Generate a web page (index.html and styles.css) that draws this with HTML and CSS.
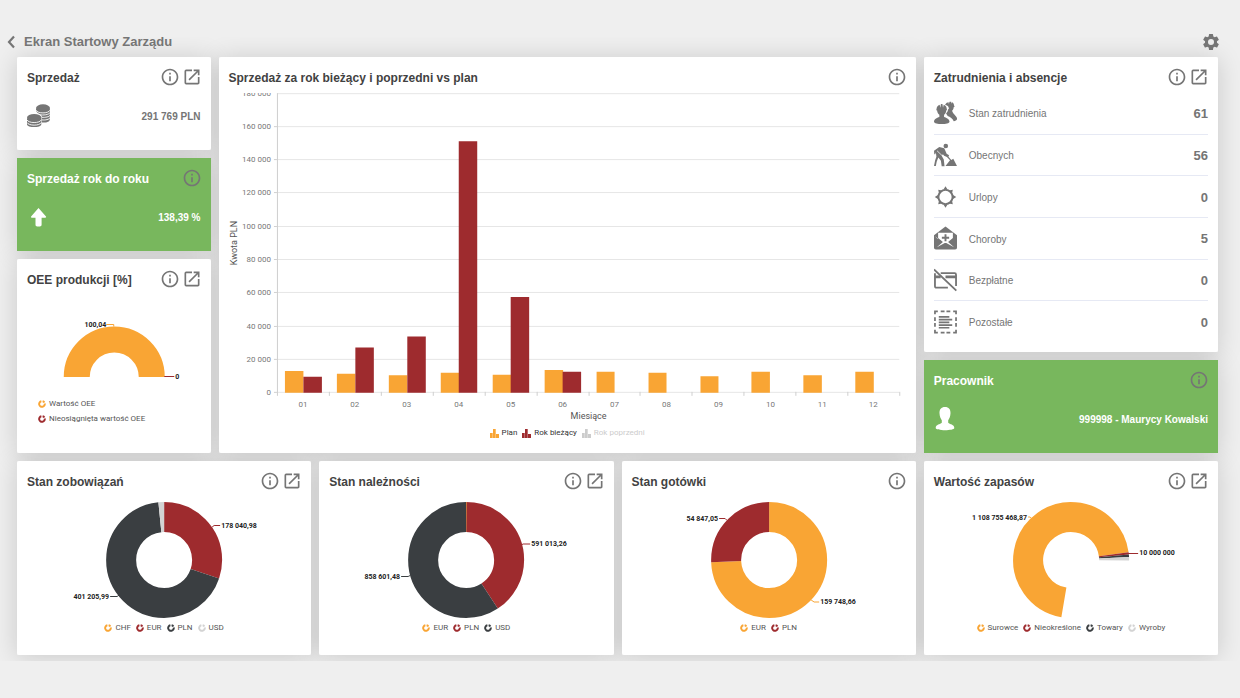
FILE: index.html
```html
<!DOCTYPE html>
<html lang="pl">
<head>
<meta charset="utf-8">
<title>Ekran Startowy Zarządu</title>
<link rel="stylesheet" href="styles.css">
</head>
<body>
<svg class="sprite" aria-hidden="true">
  <symbol id="info" viewBox="0 0 24 24"><path d="M11 7h2v2h-2zm0 4h2v6h-2zm1-9C6.480 2 2 6.480 2 12s4.480 10 10 10 10-4.480 10-10S17.520 2 12 2zm0 18c-4.410 0-8-3.590-8-8s3.590-8 8-8 8 3.590 8 8-3.590 8-8 8z"/></symbol>
  <symbol id="open" viewBox="0 0 24 24"><path d="M19 19H5V5h7V3H5a2 2 0 0 0-2 2v14a2 2 0 0 0 2 2h14c1.100 0 2-.9 2-2v-7h-2v7zM14 3v2h3.590l-9.830 9.830 1.410 1.410L19 6.410V10h2V3h-7z"/></symbol>
  <symbol id="ring" viewBox="0 0 8 8"><path d="M3.400 1.300A2.800 2.800 0 1 0 6.700 3.400M4.600 1.300A2.800 2.800 0 0 1 6.400 2.600" fill="none" stroke="currentColor" stroke-width="2"/></symbol>
  <symbol id="bars" viewBox="0 0 9 9"><path d="M0 4h2.700v5H0zM3 0h2.700v9H3zM6 5h3v4H6z"/></symbol>
</svg>

<header class="topbar">
  <button class="icon-btn back" aria-label="Wstecz"><svg viewBox="0 0 8 14"><path d="M7 1.500 2 7l5 5.500" fill="none" stroke="currentColor" stroke-width="2.200"/></svg></button>
  <h1 class="page-title">Ekran Startowy Zarządu</h1>
  <button class="icon-btn" aria-label="Ustawienia"><svg class="icon" viewBox="0 0 24 24"><path d="M19.140 12.940c.04-.3.060-.61.060-.94s-.02-.64-.07-.94l2.030-1.580a.49.49 0 0 0 .12-.61l-1.920-3.320a.49.49 0 0 0-.59-.22l-2.390.96a7 7 0 0 0-1.620-.94l-.36-2.540a.48.48 0 0 0-.48-.41h-3.840a.47.470 0 0 0-.47.410l-.36 2.540c-.59.240-1.130.570-1.620.940l-2.390-.96a.47.470 0 0 0-.59.220L2.740 8.870a.48.480 0 0 0 .12.610l2.030 1.580c-.05.300-.09.630-.09.940s.020.640.070.940l-2.030 1.580a.49.490 0 0 0-.12.610l1.920 3.320c.12.220.370.290.590.220l2.390-.96c.5.380 1.030.700 1.620.940l.36 2.540c.05.240.240.410.480.410h3.840c.240 0 .440-.17.470-.41l.36-2.540a6.800 6.800 0 0 0 1.620-.94l2.390.96c.220.080.470 0 .590-.22l1.920-3.320a.47.470 0 0 0-.12-.61l-2.010-1.580zM12 15.600A3.600 3.600 0 1 1 12 8.400a3.600 3.600 0 0 1 0 7.200z"/></svg></button>
</header>

<main class="board">
  <section class="card small">
    <div class="card-head"><h2>Sprzedaż</h2><button class="icon-btn" aria-label="Informacje"><svg class="icon"><use href="#info"/></svg></button><button class="icon-btn" aria-label="Otwórz"><svg class="icon"><use href="#open"/></svg></button></div>
    <div class="kpi">
      <svg class="kpi-icon" viewBox="0 0 24 24"><path d="M9 4.800C9 10 12 8.500 14.800 12v6.500c4 .5 8-.8 8-2.800v-11zM0 14.500v5.700C0 24 14.300 24 14.300 20.200v-5.700z"/><g fill="none" stroke="#fff" stroke-width=".9"><path d="M9 6.200c1.500 3.600 12.400 3.600 14 0M12.500 10.700c3.500.8 9.500 0 10.500-2M14.800 13.300c3.600.4 7.500-.5 8.200-2.100M14.800 15.900c3.600.4 7.500-.5 8.200-2.100M0 15.900c1.500 3.500 12.800 3.500 14.300 0M0 18.500c1.500 3.500 12.800 3.500 14.300 0"/></g><ellipse cx="16" cy="4" rx="7" ry="3.700"/><ellipse cx="7.200" cy="13.700" rx="7.200" ry="3.800"/></svg>
      <span>291 769 PLN</span>
    </div>
  </section>

  <section class="card chart-card">
    <div class="card-head"><h2>Sprzedaż za rok bieżący i poprzedni vs plan</h2><button class="icon-btn" aria-label="Informacje"><svg class="icon"><use href="#info"/></svg></button></div>
    <svg class="bar-chart" viewBox="0 0 678 330" role="img" aria-label="Sprzedaż miesięczna">
      <path class="grid-line" d="M48 .5H671M48 33.500H671M48 66.500H671M48 99.500H671M48 133.500H671M48 166.500H671M48 199.500H671M48 233.500H671M48 266.500H671M48 299.500H671"/>
      <path class="axis" d="M48.500 0V303M45 33.500h3M45 66.500h3M45 99.500h3M45 133.500h3M45 166.500h3M45 199.500h3M45 233.500h3M45 266.500h3M45 299.500h3M100.500 299v4M152.500 299v4M204.500 299v4M256.500 299v4M308.500 299v4M360.500 299v4M411.500 299v4M463.500 299v4M515.500 299v4M567.500 299v4M619.500 299v4M671.500 299v4"/>
      <g class="axis-text end">
        <text x="42" y="3">180 000</text><text x="42" y="36">160 000</text><text x="42" y="69">140 000</text><text x="42" y="102">120 000</text><text x="42" y="136">100 000</text><text x="42" y="169">80 000</text><text x="42" y="202">60 000</text><text x="42" y="236">40 000</text><text x="42" y="269">20 000</text><text x="42" y="302">0</text>
      </g>
      <path class="fill-orange" d="M56 278h18.500v22H56zM108 281h18.500v19H108zM160 282.500h18.500V300H160zM212 280h18.500v20H212zM264 282h18.500v18H264zM316 277h18.500v23H316zM368 279h18v21h-18zM420 280h18v20h-18zM472 283.500h18V300h-18zM523 279h18.500v21H523zM575 282.500h18.500V300H575zM627 279h18.500v21H627z"/>
      <path class="fill-red" d="M74.500 284H93v16H74.500zM126.500 254.500H145V300h-18.500zM178.500 243.500H197V300h-18.500zM230 48h18.500v252H230zM282 204h18.500v96H282zM334 279h18.500v21H334z"/>
      <g class="axis-text mid">
        <text x="74" y="314">01</text><text x="126" y="314">02</text><text x="178" y="314">03</text><text x="230" y="314">04</text><text x="282" y="314">05</text><text x="334" y="314">06</text><text x="386" y="314">07</text><text x="438" y="314">08</text><text x="490" y="314">09</text><text x="542" y="314">10</text><text x="594" y="314">11</text><text x="645" y="314">12</text>
      </g>
      <text class="axis-name" x="360" y="326">Miesiące</text>
      <text class="axis-name" transform="translate(8 150) rotate(-90)">Kwota PLN</text>
    </svg>
    <ul class="legend bars-legend">
      <li><svg class="orange"><use href="#bars"/></svg>Plan</li>
      <li><svg class="red"><use href="#bars"/></svg>Rok bieżący</li>
      <li class="off"><svg><use href="#bars"/></svg>Rok poprzedni</li>
    </ul>
  </section>

  <section class="card staff-card">
    <div class="card-head"><h2>Zatrudnienia i absencje</h2><button class="icon-btn" aria-label="Informacje"><svg class="icon"><use href="#info"/></svg></button><button class="icon-btn" aria-label="Otwórz"><svg class="icon"><use href="#open"/></svg></button></div>
    <ul class="staff">
      <li><svg viewBox="0 0 24 24"><path d="M11.500 3.600C12.500 1.500 14 .9 15.200.8l.3 1.700L16.200.3h1.700l.5 2.100.4-1.700c1.400.5 2.100 1.900 2.100 3.600l.6.600-.4.900h-.5c-.1 2-.8 3-1.700 3.900 1 3.900 5 5.400 5.200 8.300 0 1-1.500 2.300-3.500 2.700-.8-2.900-4-4.700-6.300-5.600l-1.700-2.600c1.600-1.400 2-2.900 2.200-4.300l.8-1-.5-1.400c-.4-1.300-1.500-2-3.600-2.200z"/><path d="M2.600 8.300 2 9.200h1.200c.2 2.200 1 3.700 2.400 4.600v2.400C2.800 17.200.1 18.300 0 21c0 3.300 16 3.500 16.200 0-.2-2.700-2.900-3.800-5.700-4.800v-2.400c1.400-.9 2.100-2.400 2.300-4.600H14l-.6-.9c-.1-2.600-1-4.400-3.300-5l-.7 3.200-.6-3.800H7.200l-.6 3.800-.7-3.200c-2.200.6-3.200 2.400-3.300 5z"/></svg><span>Stan zatrudnienia</span><b>61</b></li>
      <li><svg viewBox="0 0 24 24"><circle cx="12.300" cy="2.600" r="2.400"/><path d="M0 7.600 5.500 3.600l5.200 1.300 2.500 5.800 2.500 1.500-.6 1.700 3 3.200 2-1.100 3.900 7.500H12l4.700-6-3.200-3.400-3-1.400-1.200-1.500-1.300 1.500 2.200 4 .8 7.100H8L7.200 18l-2.700-3.500-1.700 4.600-.9 4.300H0l1.200-6 1.300-3.600-.5-4.400-.7 1.700H.3z"/><path d="m3.200 7.600 5.200 5" stroke="#fff" stroke-width=".8"/></svg><span>Obecnych</span><b>56</b></li>
      <li><svg viewBox="0 0 24 24"><circle cx="12" cy="12" r="7.400" fill="none" stroke="currentColor" stroke-width="2"/><path d="M12 .8 14.300 4.500H9.700zM12 23.200l-2.300-3.700h4.600zM.8 12l3.700-2.300v4.600zM23.200 12l-3.700 2.300V9.700zM4.400 4.400l4 .8-3.200 3.200zM19.600 4.400l-.8 4-3.200-3.200zM4.400 19.600l.8-4 3.200 3.200zM19.600 19.600l-4-.8 3.200-3.200z"/></svg><span>Urlopy</span><b>0</b></li>
      <li><svg viewBox="0 0 24 24"><path d="M12 0 24 9v13c0 1.200-.8 2-2 2H2c-1.200 0-2-.8-2-2V9z"/><path fill="#fff" d="M4.300 6.400h15.400V12l-5 4.200 6.300 5.500-8.200-4.400h-1.600L3 21.700l6.300-5.500-5-4.200zM.8 9.800 4 12.500 3.800 13z"/><path d="M11 8v2.700H8.200v2H11v2.700h2v-2.700h2.800v-2H13V8z"/></svg><span>Choroby</span><b>5</b></li>
      <li><svg viewBox="0 0 24 24"><g fill="none" stroke="currentColor" stroke-width="1.900"><path d="M0 1 23.300 23M7 4.900h14.500c.9 0 1.500.7 1.500 1.600v11.800M14.500 20H2.500C1.600 20 1 19.400 1 18.500V5"/><path d="M12 8.800h11M1 8.800h6" stroke-width="3"/></g></svg><span>Bezpłatne</span><b>0</b></li>
      <li><svg viewBox="0 0 24 24"><g fill="none" stroke="currentColor" stroke-width="1.800"><path d="M1 4V1h3M7 1h4M13 1h4M20 1h3v3M23 7v4M23 13v4M23 20v3h-3M17 23h-4M11 23H7M4 23H1v-3M1 17v-4M1 11V7"/><path d="M5 6.600h11M5 9.600h14M5 12.400h11M5 15.300h14M5 18h11"/></g></svg><span>Pozostałe</span><b>0</b></li>
    </ul>
  </section>

  <section class="card small green">
    <div class="card-head"><h2>Sprzedaż rok do roku</h2><button class="icon-btn" aria-label="Informacje"><svg class="icon"><use href="#info"/></svg></button></div>
    <div class="kpi">
      <svg class="kpi-icon" viewBox="0 0 24 24"><path d="M11.500 3 19 11.500c.4.600 0 1.200-.7 1.200h-3.700v7c0 1.100-.9 1.700-1.700 1.700h-2.700c-.9 0-1.700-.6-1.700-1.700v-7H4.800c-.8 0-1.100-.6-.7-1.200z"/></svg>
      <span>138,39 %</span>
    </div>
  </section>

  <section class="card oee-card">
    <div class="card-head"><h2>OEE produkcji [%]</h2><button class="icon-btn" aria-label="Informacje"><svg class="icon"><use href="#info"/></svg></button><button class="icon-btn" aria-label="Otwórz"><svg class="icon"><use href="#open"/></svg></button></div>
    <svg class="gauge" viewBox="0 0 173 106" role="img" aria-label="OEE produkcji">
      <path class="gauge-arc" d="M49.500 88a37.500 37.500 0 0 1 75 0"/>
      <path class="lead orange" d="M79 35.500h7.500v2"/><path class="lead red" d="M137 87.500h10"/>
      <g class="value"><text class="end" x="79" y="38">100,04</text><text x="148" y="90">0</text></g>
    </svg>
    <ul class="legend stacked">
      <li><svg class="orange"><use href="#ring"/></svg>Wartość OEE</li>
      <li><svg class="red"><use href="#ring"/></svg>Nieosiągnięta wartość OEE</li>
    </ul>
  </section>

  <section class="card worker-card green">
    <div class="card-head"><h2>Pracownik</h2><button class="icon-btn" aria-label="Informacje"><svg class="icon"><use href="#info"/></svg></button></div>
    <div class="kpi">
      <svg class="kpi-icon" viewBox="0 0 24 24"><path d="M11 0c3.800 0 5.700 2.300 5.500 6.300-.1 3.500-1.300 5.400-2.300 6.900v2.600c1.500 1.500 6.100 1.700 6.100 5.200 0 2.900-18.600 2.900-18.600 0 0-3.500 4.600-3.700 6.100-5.200v-2.600C6.800 11.700 5.600 9.800 5.500 6.300 5.300 2.300 7.200 0 11 0z"/></svg>
      <span>999998 - Maurycy Kowalski</span>
    </div>
  </section>

  <section class="card donut-card">
    <div class="card-head"><h2>Stan zobowiązań</h2><button class="icon-btn" aria-label="Informacje"><svg class="icon"><use href="#info"/></svg></button><button class="icon-btn" aria-label="Otwórz"><svg class="icon"><use href="#open"/></svg></button></div>
    <svg class="donut" viewBox="5 0 270 130" role="img" aria-label="Stan zobowiązań">
      <g class="slices" transform="rotate(-90 140 69)">
        <circle class="red" cx="140" cy="69" r="43" pathLength="100" stroke-dasharray="30.200 100"/>
        <circle class="dark" cx="140" cy="69" r="43" pathLength="100" stroke-dasharray="68.200 100" stroke-dashoffset="-30.200"/>
        <circle class="light" cx="140" cy="69" r="43" pathLength="100" stroke-dasharray="1.600 100" stroke-dashoffset="-98.400"/>
      </g>
      <path class="lead red" d="m188 36 2-1.500h6"/><path class="lead dark" d="M86 105.500h7l2-1.500"/>
      <g class="value"><text x="197" y="37">178 040,98</text><text class="end" x="85" y="108">401 205,99</text></g>
    </svg>
    <ul class="legend">
      <li><svg class="orange"><use href="#ring"/></svg>CHF</li><li><svg class="red"><use href="#ring"/></svg>EUR</li><li><svg class="dark"><use href="#ring"/></svg>PLN</li><li><svg class="light"><use href="#ring"/></svg>USD</li>
    </ul>
  </section>

  <section class="card donut-card">
    <div class="card-head"><h2>Stan należności</h2><button class="icon-btn" aria-label="Informacje"><svg class="icon"><use href="#info"/></svg></button><button class="icon-btn" aria-label="Otwórz"><svg class="icon"><use href="#open"/></svg></button></div>
    <svg class="donut" viewBox="5 0 270 130" role="img" aria-label="Stan należności">
      <g class="slices" transform="rotate(-90 140 69)">
        <circle class="red" cx="140" cy="69" r="43" pathLength="100" stroke-dasharray="40.800 100"/>
        <circle class="dark" cx="140" cy="69" r="43" pathLength="100" stroke-dasharray="59.200 100" stroke-dashoffset="-40.800"/>
        <circle class="orange" cx="140" cy="69" r="43" pathLength="100" stroke-dasharray=".15 100"/>
      </g>
      <path class="lead red" d="m195 54 2-1h7"/><path class="lead dark" d="M75 85.500h7l2-1"/>
      <g class="value"><text x="205" y="55">591 013,26</text><text class="end" x="74" y="88">858 601,48</text></g>
    </svg>
    <ul class="legend">
      <li><svg class="orange"><use href="#ring"/></svg>EUR</li><li><svg class="red"><use href="#ring"/></svg>PLN</li><li><svg class="dark"><use href="#ring"/></svg>USD</li>
    </ul>
  </section>

  <section class="card donut-card">
    <div class="card-head"><h2>Stan gotówki</h2><button class="icon-btn" aria-label="Informacje"><svg class="icon"><use href="#info"/></svg></button></div>
    <svg class="donut" viewBox="5 0 270 130" role="img" aria-label="Stan gotówki">
      <g class="slices" transform="rotate(-90 140 69)">
        <circle class="orange" cx="140" cy="69" r="43" pathLength="100" stroke-dasharray="74.400 100"/>
        <circle class="red" cx="140" cy="69" r="43" pathLength="100" stroke-dasharray="25.600 100" stroke-dashoffset="-74.400"/>
      </g>
      <path class="lead red" d="M90 27.500h6l2 2"/><path class="lead orange" d="m182 109 3 2h5"/>
      <g class="value"><text class="end" x="89" y="30">54 847,05</text><text x="191" y="113">159 748,66</text></g>
    </svg>
    <ul class="legend">
      <li><svg class="orange"><use href="#ring"/></svg>EUR</li><li><svg class="red"><use href="#ring"/></svg>PLN</li>
    </ul>
  </section>

  <section class="card donut-card">
    <div class="card-head"><h2>Wartość zapasów</h2><button class="icon-btn" aria-label="Informacje"><svg class="icon"><use href="#info"/></svg></button><button class="icon-btn" aria-label="Otwórz"><svg class="icon"><use href="#open"/></svg></button></div>
    <svg class="donut" viewBox="5 0 270 130" role="img" aria-label="Wartość zapasów">
      <g class="slices">
        <circle class="orange" cx="140" cy="69" r="43" pathLength="360" stroke-dasharray="252.500 360" transform="rotate(99.700 140 69)"/>
        <circle class="red" cx="140" cy="69" r="43" pathLength="360" stroke-dasharray="2.300 360" transform="rotate(-7.800 140 69)"/>
        <circle class="dark" cx="140" cy="69" r="43" pathLength="360" stroke-dasharray="2.500 360" transform="rotate(-5.500 140 69)"/>
        <circle class="light" cx="140" cy="69" r="43" pathLength="360" stroke-dasharray="3.600 360" transform="rotate(-3 140 69)"/>
      </g>
      <path class="lead orange" d="M97 26h2l2 2"/><path class="lead red" d="M194 62.500h13"/>
      <g class="value"><text class="end" x="96" y="29">1 108 755 468,87</text><text x="208" y="64">10 000 000</text></g>
    </svg>
    <ul class="legend">
      <li><svg class="orange"><use href="#ring"/></svg>Surowce</li><li><svg class="red"><use href="#ring"/></svg>Nieokreślone</li><li><svg class="dark"><use href="#ring"/></svg>Towary</li><li><svg class="light"><use href="#ring"/></svg>Wyroby</li>
    </ul>
  </section>
</main>
</body>
</html>
```

FILE: styles.css
```css
* { box-sizing: border-box; }

body {
  margin: 0;
  padding-top: 32px;
  background: #efefef;
  color: #757575;
  font: 10px "Liberation Sans", Arial, sans-serif;
}

.sprite { display: none; }
svg { fill: currentColor; }

.orange { color: #f9a534; }
.red { color: #9e2b2e; }
.dark { color: #3a3e41; }
.light { color: #d3d3d3; }

.icon-btn {
  display: flex;
  flex: none;
  padding: 0;
  border: 0;
  background: none;
  color: #757575;
  cursor: pointer;
}
.icon { width: 20px; height: 20px; }

.topbar {
  position: relative;
  z-index: 1;
  display: flex;
  align-items: center;
  gap: 9px;
  padding: 0 19px 0 7px;
}
.back svg { width: 8px; height: 14px; }
.page-title {
  flex: 1;
  margin: 0;
  font-size: 13px;
  line-height: 20px;
}

.board {
  display: grid;
  grid-template-columns: repeat(12, minmax(0, 1fr));
  grid-template-rows: repeat(6, minmax(93px, auto));
  gap: 8px;
  margin-top: -15px;
  padding: 20px 22px 6px 17px;
  overflow: hidden;
  isolation: isolate;
}

.card {
  position: relative;
  display: flex;
  flex-direction: column;
  grid-column: span 3;
  padding: 10px;
  border-radius: 2px;
  background: #fff;
}
.card::before {
  content: "";
  position: absolute;
  inset: 0;
  z-index: -1;
  box-shadow: 0 2px 24px rgba(0, 0, 0, 0.16);
}
.small { grid-column: 1 / span 2; }
.chart-card { grid-column: 3 / span 7; grid-row: 1 / span 4; }
.staff-card { grid-column: 10 / span 3; grid-row: 1 / span 3; }
.oee-card { grid-column: 1 / span 2; grid-row: 3 / span 2; }
.worker-card { grid-column: 10 / span 3; grid-row: 4; }
.donut-card { grid-row: 5 / span 2; }
.green { border-radius: 0; background: #78b75d; color: #fff; }

.card-head {
  display: flex;
  align-items: center;
  gap: 2px;
  margin-right: -1px;
}
.card-head h2 {
  flex: 1;
  margin: 0;
  padding-top: 2px;
  color: #424242;
  font-size: 12px;
  line-height: 18px;
  white-space: nowrap;
}
.green h2 { color: #fff; }

.kpi {
  display: flex;
  align-items: center;
  justify-content: space-between;
  margin-top: 17px;
  font-weight: bold;
}
.kpi-icon { width: 24px; height: 24px; }

.staff {
  display: grid;
  flex: 1;
  grid-auto-rows: 1fr;
  margin: 5px 0 0;
  padding: 0;
  list-style: none;
}
.staff li { display: flex; align-items: center; gap: 12px; }
.staff li + li { border-top: 1px solid #e6e9f4; }
.staff svg { width: 23px; height: 24px; }
.staff span { flex: 1; padding-top: 2px; }
.staff b { padding-top: 1px; font-size: 13px; }

.bar-chart {
  display: block;
  width: 100%;
  height: 330px;
  margin-top: 6px;
  overflow: hidden;
  font-family: Roboto, sans-serif;
}
.grid-line { stroke: #e6e6e6; }
.axis { stroke: #cfcfcf; }
.axis-text { fill: #777; font-size: 8px; }
.axis-name { fill: #555; font-size: 9px; text-anchor: middle; }
.end { text-anchor: end; }
.mid { text-anchor: middle; }
.fill-orange { fill: #f9a534; }
.fill-red { fill: #9e2b2e; }

.legend {
  display: flex;
  justify-content: center;
  gap: 5px;
  margin: 0;
  padding: 0;
  color: #555;
  font: 8px/14px Roboto, sans-serif;
  list-style: none;
}
.legend li { display: flex; align-items: center; gap: 3px; white-space: nowrap; }
.legend svg { width: 8px; height: 8px; }
.bars-legend { margin-top: 3px; }
.bars-legend li { gap: 3px; color: #333; }
.bars-legend svg { width: 9px; height: 9px; }
.bars-legend .off { color: #ccc; }
.stacked { flex-direction: column; gap: 1px; padding: 2px 0 0 11px; }

.gauge { width: 100%; height: 106px; }
.gauge-arc { fill: none; stroke: #f9a534; stroke-width: 26; }
.donut { width: 100%; height: 130px; overflow: visible; }
.slices { fill: none; stroke-width: 30; }
.slices circle { stroke: currentColor; }
.lead { fill: none; stroke: currentColor; }
.value { fill: #222; font: bold 7px Roboto, sans-serif; }
```
